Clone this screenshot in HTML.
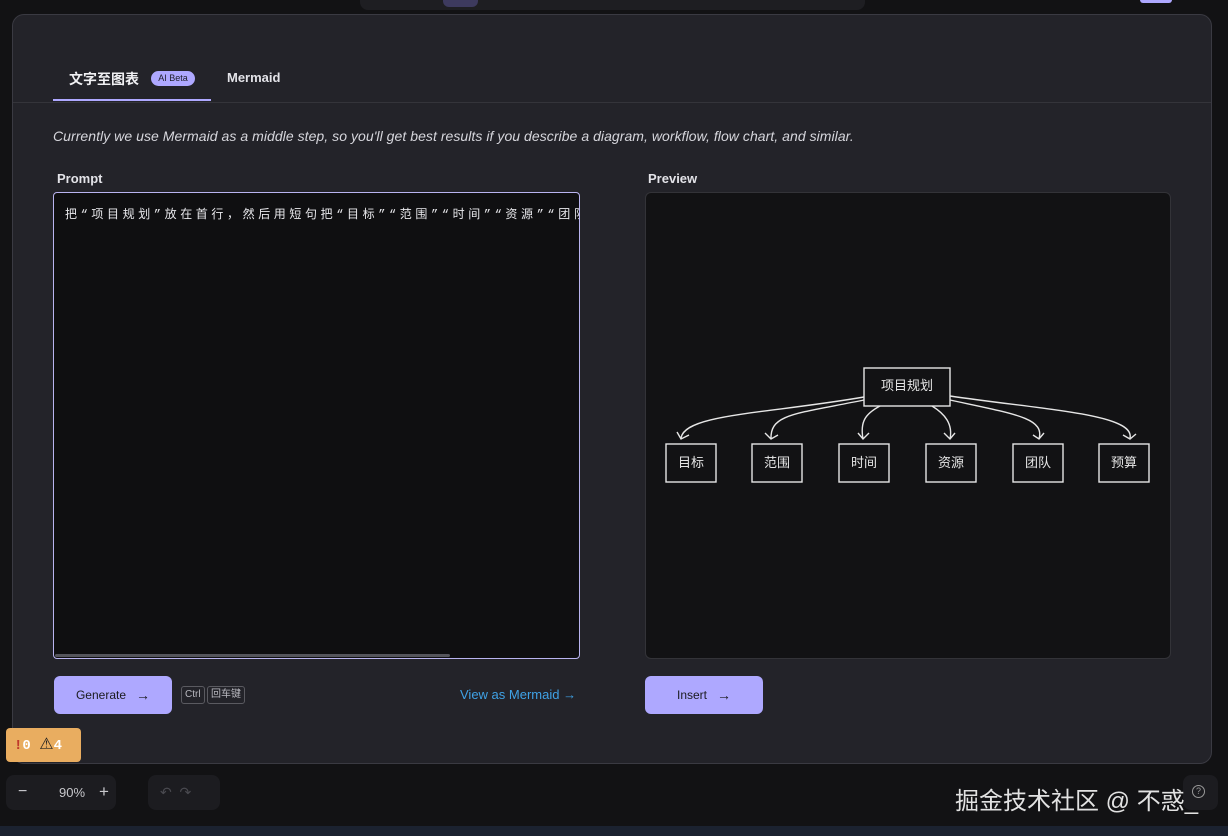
<!DOCTYPE html>
<html><head><meta charset="utf-8"><style>
*{box-sizing:border-box;margin:0;padding:0}
body{width:1228px;height:836px;background:#121214;position:relative;overflow:hidden;font-family:"Liberation Sans","Noto Sans CJK SC",sans-serif;color:#e3e3e8}
.abs{position:absolute}
.dlg{left:12px;top:14px;width:1200px;height:750px;background:#232329;border:1px solid #3a3a42;border-radius:12px}
.btn{background:#aea8ff;border-radius:6px;color:#1b1b1f;font-size:12px;display:flex;align-items:center;justify-content:center;gap:10px}
.kbd{border:1px solid #5a5a60;border-radius:3px;font-size:10px;color:#b8b8bf;height:18px;line-height:16px;padding:0 3px}
</style></head><body>
<div class="abs" style="left:360px;top:0;width:505px;height:10px;background:#1e1e22;border-radius:0 0 8px 8px"></div>
<div class="abs" style="left:443px;top:0;width:35px;height:7px;background:#3d3a5e;border-radius:0 0 6px 6px"></div>
<div class="abs" style="left:1140px;top:0;width:32px;height:3px;background:#aea8ff;border-radius:0 0 4px 4px"></div>
<div class="abs dlg"></div>
<div class="abs" style="left:69px;top:69px;font-size:14px;font-weight:bold;color:#f0f0f3">文字至图表</div>
<div class="abs" style="left:151px;top:71px;width:44px;height:15px;border-radius:8px;background:#aea8ff;color:#1e1e2a;font-size:9px;line-height:15px;text-align:center">AI Beta</div>
<div class="abs" style="left:227px;top:70px;font-size:13px;font-weight:bold;color:#e3e3e8">Mermaid</div>
<div class="abs" style="left:13px;top:102px;width:1198px;height:1px;background:#34343a"></div>
<div class="abs" style="left:53px;top:99px;width:158px;height:2px;background:#aea8ff"></div>
<div class="abs" style="left:53px;top:128px;font-size:14px;font-style:italic;color:#d6d6dc;letter-spacing:0.05px">Currently we use Mermaid as a middle step, so you'll get best results if you describe a diagram, workflow, flow chart, and similar.</div>
<div class="abs" style="left:57px;top:171px;font-size:13px;font-weight:bold;color:#e3e3e8">Prompt</div>
<div class="abs" style="left:648px;top:171px;font-size:13px;font-weight:bold;color:#e3e3e8">Preview</div>
<div class="abs" style="left:53px;top:192px;width:527px;height:467px;background:#0f0f11;border:1px solid #b9b4f0;border-radius:4px;overflow:hidden">
<div style="position:absolute;left:11px;top:12px;white-space:nowrap;font-size:12px;letter-spacing:3.6px;color:#e8e8ec;font-family:'Liberation Mono','Noto Sans CJK SC',monospace">把“项目规划”放在首行，然后用短句把“目标”“范围”“时间”“资源”“团队”“预算”</div>
<div style="position:absolute;left:1px;bottom:1px;width:395px;height:3px;background:#55555c;border-radius:2px"></div>
</div>
<div class="abs" style="left:645px;top:192px;width:526px;height:467px;background:#121214;border:1px solid #333338;border-radius:6px"></div>
<svg class="abs" style="left:645px;top:192px" width="526" height="467" fill="none" stroke="#e6e6e6" stroke-width="1.4">
<g font-family="Liberation Sans,Noto Sans CJK SC,sans-serif" font-size="13" fill="#e6e6e6" stroke="none" text-anchor="middle">
<text x="262" y="198">项目规划</text>
<text x="46" y="275">目标</text><text x="132" y="275">范围</text><text x="219" y="275">时间</text><text x="306" y="275">资源</text><text x="393" y="275">团队</text><text x="479" y="275">预算</text>
</g>
<rect x="219" y="176" width="86" height="38"/>
<rect x="21" y="252" width="50" height="38"/><rect x="107" y="252" width="50" height="38"/><rect x="194" y="252" width="50" height="38"/><rect x="281" y="252" width="50" height="38"/><rect x="368" y="252" width="50" height="38"/><rect x="454" y="252" width="50" height="38"/>
<path d="M219 205 C120 222 40 222 36 246 M32 240 L36 247 L44 243"/>
<path d="M219 208 C150 222 125 222 126 247 M120 241 L126 247 L133 243"/>
<path d="M235 214 C220 222 215 230 218 247 M213 241 L218 247 L224 241"/>
<path d="M287 214 C300 222 308 232 305 247 M299 241 L305 247 L310 241"/>
<path d="M305 208 C370 222 400 226 394 247 M388 243 L394 247 L399 241"/>
<path d="M305 204 C400 218 490 222 485 246 M478 243 L485 247 L491 242"/>
</svg>
<div class="abs btn" style="left:54px;top:676px;width:118px;height:38px">Generate <span style="font-size:14px">→</span></div>
<div class="abs kbd" style="left:181px;top:686px">Ctrl</div>
<div class="abs kbd" style="left:207px;top:686px;font-size:10px">回车键</div>
<div class="abs" style="left:460px;top:687px;font-size:13px;color:#3fa2e6">View as Mermaid →</div>
<div class="abs btn" style="left:645px;top:676px;width:118px;height:38px">Insert <span style="font-size:14px">→</span></div>
<div class="abs" style="left:6px;top:728px;width:75px;height:34px;background:#e9ad60;border-radius:4px;font-size:14px;font-weight:bold;color:#fff;line-height:34px;padding-left:8px;font-family:'Liberation Mono','DejaVu Sans',monospace"><span style="color:#c0392b">!</span>0 <span style="color:#222;font-size:16px">⚠</span>4</div>
<div class="abs" style="left:6px;top:775px;width:110px;height:35px;background:#1c1c20;border-radius:8px;font-size:13px;color:#c8c8cc">
<span class="abs" style="left:12px;top:8px;font-size:16px">−</span><span class="abs" style="left:53px;top:10px">90%</span><span class="abs" style="left:93px;top:7px;font-size:17px">+</span></div>
<div class="abs" style="left:148px;top:775px;width:72px;height:35px;background:#1c1c20;border-radius:8px;color:#4a4a50;font-size:14px;line-height:35px;padding-left:12px">↶ &nbsp;↷</div>
<div class="abs" style="left:1183px;top:775px;width:35px;height:35px;background:#1c1c20;border-radius:8px"></div>
<div class="abs" style="left:955px;top:781px;font-size:24px;color:#e2e2e2;white-space:nowrap">掘金技术社区 @ 不惑_</div>
<div class="abs" style="left:1192px;top:785px;width:13px;height:13px;border:1px solid #999;border-radius:50%;font-size:9px;line-height:11px;text-align:center;color:#999">?</div>
<div class="abs" style="left:0;top:826px;width:1228px;height:10px;background:#1b2230"></div>
</body></html>
